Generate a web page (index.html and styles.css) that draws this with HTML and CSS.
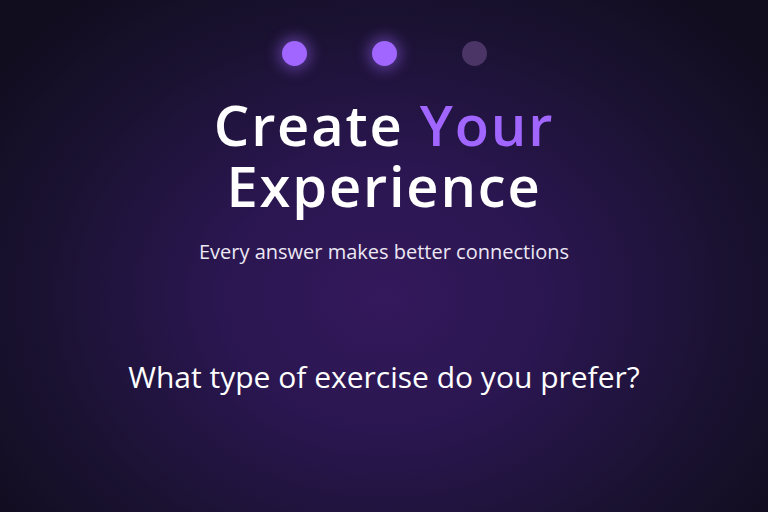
FILE: index.html
```html
<!DOCTYPE html>
<html lang="en">
<head>
<meta charset="utf-8">
<title>Create Your Experience</title>
<link rel="stylesheet" href="styles.css">
</head>
<body>
<main class="screen">
  <div class="steps">
    <span class="dot active"></span>
    <span class="dot active"></span>
    <span class="dot"></span>
  </div>
  <h1 class="title">Create <span class="accent">Your</span><br>Experience</h1>
  <p class="subtitle">Every answer makes better connections</p>
  <h2 class="question">What type of exercise do you prefer?</h2>
</main>
</body>
</html>
```
FILE: styles.css
```css
* { box-sizing: border-box; }
html, body { margin: 0; height: 100%; }
body {
  background: radial-gradient(ellipse 62% 75% at 50% 58%, #34195c 0%, #2a1650 35%, #1b1233 70%, #110d1f 100%);
  color: #ffffff;
  font-family: "Open Sans", "Noto Sans", sans-serif;
  overflow: hidden;
}
.screen {
  height: 100%;
  display: flex;
  flex-direction: column;
  align-items: center;
  padding-top: 41px;
}
.steps {
  display: flex;
  gap: 65px;
}
.dot {
  width: 25px;
  height: 25px;
  border-radius: 50%;
  background: #4a3566;
}
.dot.active {
  background: #a066ff;
  box-shadow: 0 0 14px 4px rgba(160, 102, 255, 0.45);
}
.title {
  margin: 28px 0 0;
  font-size: 56px;
  font-weight: 600;
  line-height: 61px;
  text-align: center;
  letter-spacing: 1.8px;
}
.accent { color: #a066ff; }
.subtitle {
  margin: 22px 0 0;
  font-size: 20px;
  color: #ece8f4;
}
.question {
  margin: 91px 0 0;
  font-size: 30px;
  font-weight: 400;
}
```
